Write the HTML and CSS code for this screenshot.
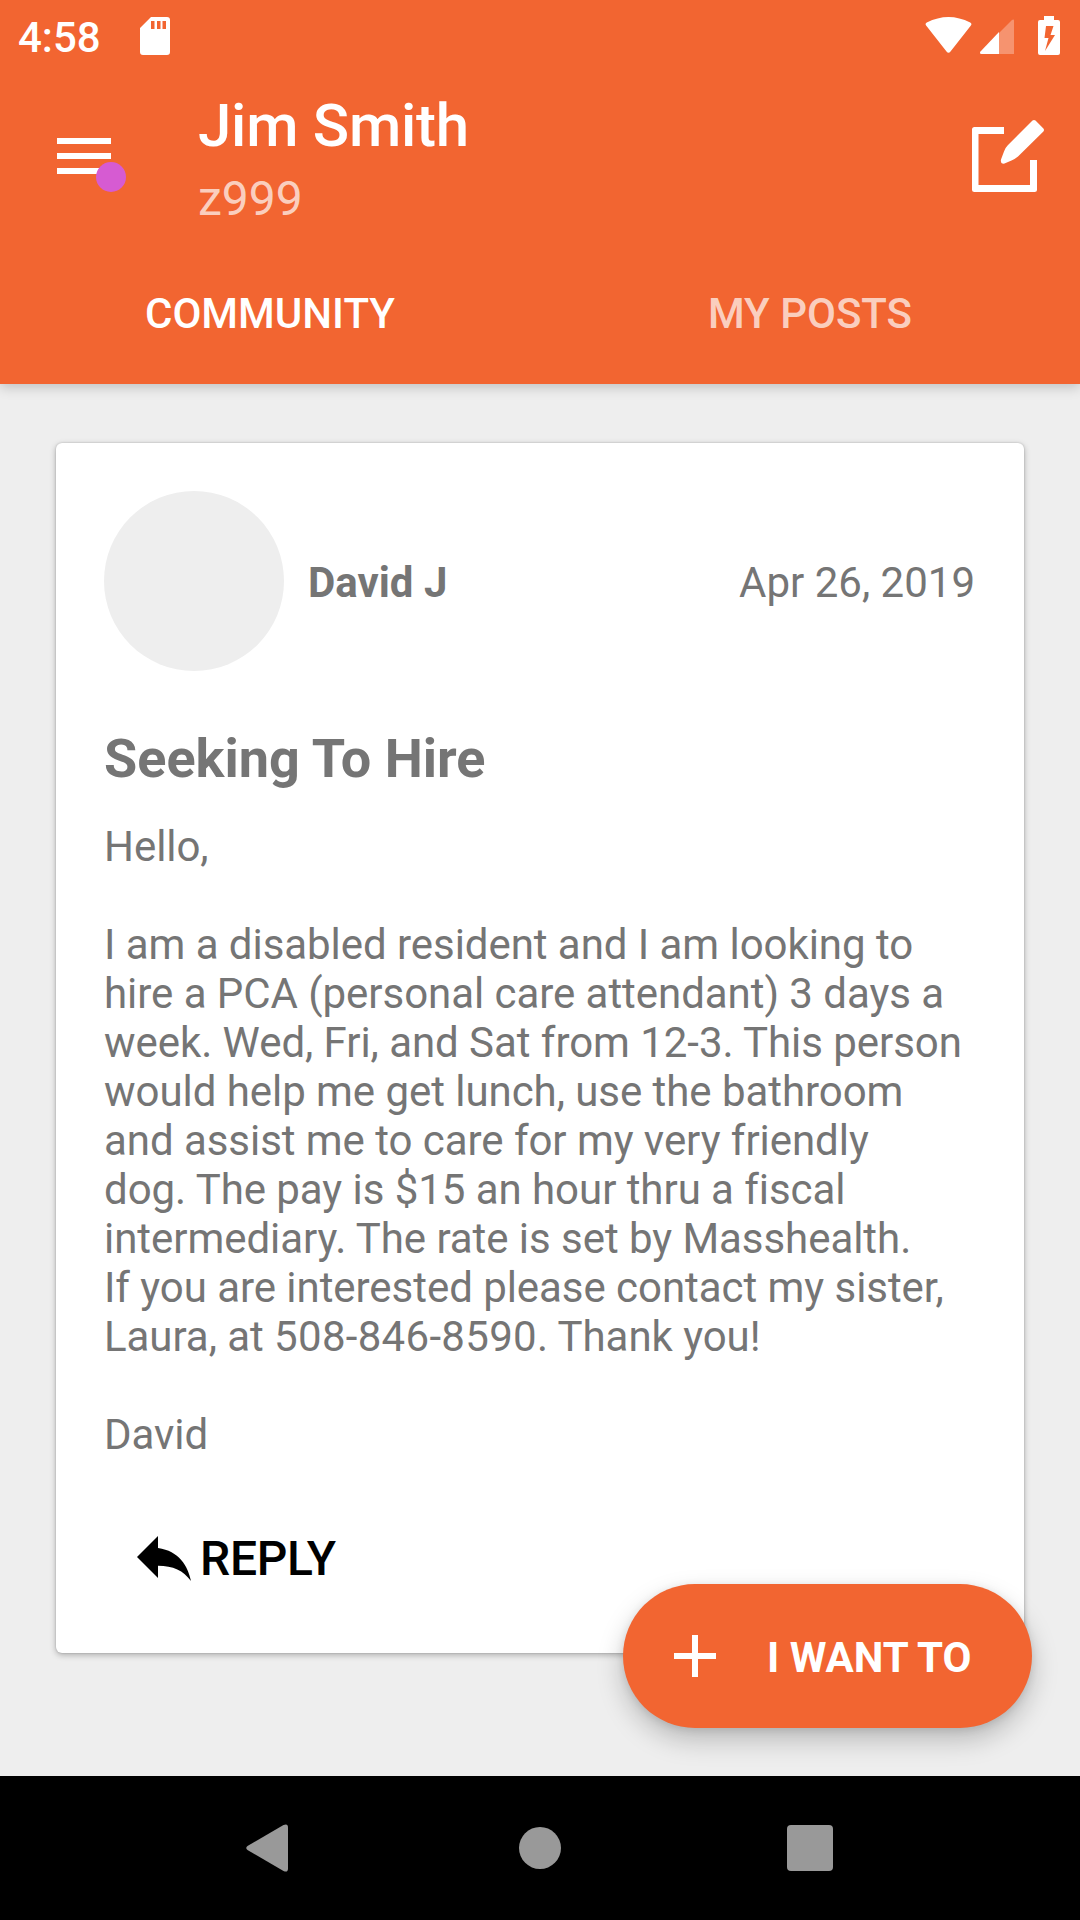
FILE: index.html
```html
<!DOCTYPE html>
<html>
	<head>
		<meta charset="utf-8">
		<title>Community</title>
		<link rel="stylesheet" href="styles.css">
	</head>
	<body>
		<div class="screen">
			<div class="header">
				<!-- status bar -->
				<div class="status">
					<span class="time">4:58</span>
					<svg class="sd" width="30" height="38" viewBox="0 0 30 38">
						<path fill="#fff" fill-rule="evenodd" d="M11 0H27Q30 0 30 3V35Q30 38 27 38H3Q0 38 0 35V11ZM11 4V12H14.5V4ZM17 4V12H20.5V4ZM22.5 4V12H26V4Z"/>
					</svg>
					<svg class="signals" width="136" height="40" viewBox="0 0 136 40">
						<path fill="#fff" d="M1.500 10Q-.5 8 1.800 6.500Q23.500-4.500 45.200 6.500Q47.500 8 45.500 10L25.500 35.500Q23.500 38 21.500 35.500Z"/>
						<path fill="#fff" fill-opacity=".3" d="M74 17L86.500 4.500Q89 2.500 89 5V38H74Z"/>
						<path fill="#fff" d="M74 16V38H56.500Q54 37.500 55.500 35.500Z"/>
						<path fill="#fff" fill-rule="evenodd" d="M119 0H129V4H133Q135 4 135 6V37Q135 39 133 39H115Q113 39 113 37V6Q113 4 115 4H119ZM121 10L119.500 22H123.500L120 35L130 19H125.500L128.500 10Z"/>
					</svg>
				</div>
				<!-- toolbar -->
				<div class="toolbar">
					<div class="menu">
						<i></i><i></i><i></i>
						<b class="dot"></b>
					</div>
					<div class="user">
						<div class="name">Jim Smith</div>
						<div class="unit">z999</div>
					</div>
					<svg class="edit" width="72" height="72" viewBox="0 0 72 72">
						<path fill="#fff" d="M2.500 7H32V14H6.500V65H58V40H65V69.500Q65 72 62.500 72H2.500Q0 72 0 69.500V9.500Q0 7 2.500 7Z"/>
						<path fill="#fff" d="M60.500.6Q62 -.6 63.500.6L71.400 8.500Q72.600 10 71.400 11.500L46 36.500Q43 39 39.500 40.500L32.500 43.500Q28 44.500 29 39.500L32 31.500Q33 28 36 25Z"/>
					</svg>
				</div>
				<div class="tabs">
					<div class="tab active">COMMUNITY</div>
					<div class="tab">MY POSTS</div>
				</div>
			</div>

			<div class="content">
				<div class="card">
					<div class="author">
						<div class="avatar"></div>
						<div class="who">David J</div>
						<div class="date">Apr 26, 2019</div>
					</div>
					<h2>Seeking To Hire</h2>
					<p>Hello,<br><br>I am a disabled resident and I am looking to hire a PCA (personal care attendant) 3 days a week. Wed, Fri, and Sat from 12-3. This person would help me get lunch, use the bathroom and assist me to care for my very friendly<br>dog. The pay is $15 an hour thru a fiscal intermediary. The rate is set by Masshealth.<br>If you are interested please contact my sister, Laura, at <span class="phone">508-846-8590</span>. Thank you!<br><br>David</p>
					<div class="reply">
						<svg width="72" height="72" viewBox="0 0 24 24"><path d="M10 9V5l-7 7 7 7v-4.100c5 0 8.500 1.600 11 5.100-1-5-4-10-11-11z"/></svg>
						<span>REPLY</span>
					</div>
				</div>
				<!-- floating button -->
				<div class="fab">
					<svg width="42" height="42" viewBox="0 0 42 42"><path fill="#fff" d="M18 0h6v18h18v6H24v18h-6V24H0v-6h18z"/></svg>
					<span>I WANT TO</span>
				</div>
			</div>

			<!-- system buttons -->
			<div class="nav">
				<svg width="42" height="48" viewBox="0 0 42 48"><path fill="#999" d="M37.500 1Q42-1 42 3.500V44.500Q42 49 37.500 47L1.500 26Q-1 24 1.500 22Z"/></svg>
				<div class="home"></div>
				<div class="recent"></div>
			</div>
		</div>
	</body>
</html>
```
FILE: styles.css
```css
*{
	margin: 0;
	padding: 0;
	box-sizing: border-box;
}
body{
	font-family: Roboto, "Liberation Sans", sans-serif;
	font-size: 42px;
	color: #757575;
}
svg{
	display: block;
	flex: none;
}
.screen{
	display: flex;
	flex-direction: column;
	width: 1080px;
	height: 1920px;
	overflow: hidden;
	background-color: #eee;
}
.header{
	position: relative;
	z-index: 1;
	height: 384px;
	color: #fff;
	background-color: #f26531;
	box-shadow: 0 3px 12px rgba(0,0,0,.2);
}
.status{
	display: flex;
	align-items: flex-start;
	height: 72px;
	padding: 0 19px 0 18px;
}
.time{
	width: 122px;
	font-weight: 500;
	line-height: 75px;
}
.sd{
	margin-top: 17px;
}
.signals{
	margin: 16px 0 0 auto;
}
.toolbar{
	display: flex;
	align-items: flex-start;
	height: 168px;
	padding: 19px 36px 0 57px;
}
.menu{
	position: relative;
	width: 54px;
	margin-top: 47px;
}
.menu i{
	display: block;
	height: 6px;
	margin-bottom: 9px;
	background-color: #fff;
}
.dot{
	position: absolute;
	top: 24px;
	left: 39px;
	width: 30px;
	height: 30px;
	border-radius: 15px;
	background-color: #d65bd2;
}
.user{
	flex: 1;
	margin-left: 87px;
}
.name{
	font-size: 60px;
	font-weight: 500;
	line-height: 70px;
	letter-spacing: -.25px;
}
.unit{
	margin-top: 10px;
	font-size: 48px;
	line-height: 56px;
	color: rgba(255,255,255,.7);
}
.edit{
	margin-top: 29px;
}
.tabs{
	display: flex;
	height: 144px;
}
.tab{
	flex: 1;
	font-weight: 500;
	line-height: 147px;
	text-align: center;
	color: rgba(255,255,255,.7);
}
.tab.active{
	color: #fff;
}
.content{
	position: relative;
	flex: 1;
	padding: 59px 56px 0;
}
.card{
	height: 1210px;
	padding: 48px;
	border-radius: 6px;
	background-color: #fff;
	box-shadow: 0 2px 6px rgba(0,0,0,.28), 0 0 2px rgba(0,0,0,.2);
}
.author{
	display: flex;
	align-items: center;
	height: 180px;
	line-height: 49px;
}
.avatar{
	width: 180px;
	height: 180px;
	border-radius: 50%;
	background-color: #eee;
}
.who{
	flex: 1;
	padding-top: 3px;
	margin-left: 24px;
	font-weight: 700;
}
.date{
	padding: 3px 1px 0 0;
}
h2{
	margin-top: 56px;
	font-size: 54px;
	font-weight: 700;
	line-height: 63px;
}
.card p{
	margin-top: 32px;
	line-height: 49px;
	letter-spacing: -.05px;
}
.phone{
	letter-spacing: .3px;
}
.reply{
	display: flex;
	align-items: center;
	margin: 62px 0 0 24px;
	font-size: 48px;
	font-weight: 500;
	letter-spacing: -.3px;
	color: #000;
}
.reply span{
	padding-top: 3px;
}
.fab{
	position: absolute;
	right: 48px;
	bottom: 48px;
	display: flex;
	align-items: center;
	width: 409px;
	height: 144px;
	padding-left: 51px;
	border-radius: 72px;
	font-weight: 700;
	color: #fff;
	background-color: #f26531;
	box-shadow: 0 12px 27px rgba(0,0,0,.22), 0 2px 8px rgba(0,0,0,.1);
}
.fab span{
	padding-top: 3px;
	margin-left: 51px;
}
.nav{
	position: relative;
	display: flex;
	align-items: center;
	height: 144px;
	padding-left: 246px;
	background-color: #000;
}
.home{
	width: 42px;
	height: 42px;
	margin: 0 226px 0 231px;
	border-radius: 50%;
	background-color: #999;
}
.recent{
	width: 46px;
	height: 46px;
	border-radius: 4px;
	background-color: #999;
}
```
